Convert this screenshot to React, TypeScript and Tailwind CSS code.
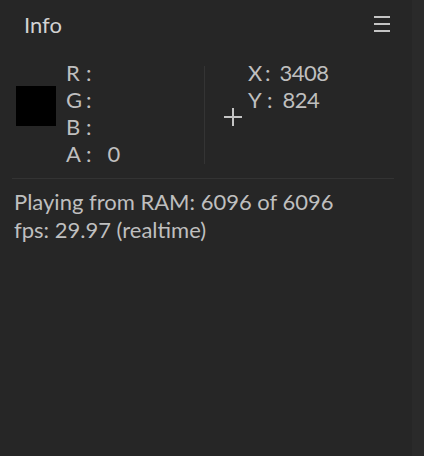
const font = { fontFamily: "Lato, 'Open Sans', sans-serif" }

function Channel({ label, value }: { label: string; value?: string }) {
  return (
    <div className="flex h-[27px] items-center">
      <span className="w-[14px] text-center">{label}</span>
      <span className="ml-[6px]">:</span>
      {value && <span className="ml-[16px]">{value}</span>}
    </div>
  )
}

export default function App() {
  return (
    <div className="flex h-[456px] w-[424px] bg-[#262626] text-[#bfbfbf]" style={font}>
      <div className="flex w-[412px] flex-col">
        <header className="flex h-[48px] items-center justify-between pl-6 pr-[22px]">
          <h1 className="text-[22px] text-[#d2d2d2]">Info</h1>
          <div className="flex w-[16px] flex-col gap-[5px]">
            <div className="h-[2px] bg-[#c4c4c4]" />
            <div className="h-[2px] bg-[#c4c4c4]" />
            <div className="h-[2px] bg-[#c4c4c4]" />
          </div>
        </header>

        <section className="ml-3 mr-[18px] flex h-[131px] border-b border-[#333333] pt-[11px] text-[22px] leading-none">
          <div className="flex w-[192px] items-start">
            <div className="ml-1 mt-[27px] h-10 w-10 bg-black" />
            <div className="ml-[10px] flex flex-col">
              <Channel label="R" />
              <Channel label="G" />
              <Channel label="B" />
              <Channel label="A" value="0" />
            </div>
          </div>
          <div className="mb-[14px] mt-[7px] w-px bg-[#343434]" />
          <div className="flex">
            <div className="relative ml-[19px] mt-[49px] h-[18px] w-[18px]">
              <div className="absolute left-[8px] top-0 h-full w-[2px] bg-[#c4c4c4]" />
              <div className="absolute left-0 top-[8px] h-[2px] w-full bg-[#c4c4c4]" />
            </div>
            <div className="ml-[6px] flex flex-col">
              <div className="flex h-[27px] items-center">
                <span className="w-[12px]">X</span>
                <span className="ml-[5px]">:</span>
                <span className="ml-[9px] tracking-[-0.5px]">3408</span>
              </div>
              <div className="flex h-[27px] items-center">
                <span className="w-[12px]">Y</span>
                <span className="ml-[7px]">:</span>
                <span className="ml-[10px] tracking-[-0.5px]">824</span>
              </div>
            </div>
          </div>
        </section>

        <div className="px-[14px] pt-[9px] text-[22px] leading-[28px]">
          <p>Playing from RAM: 6096 of 6096</p>
          <p>fps: 29.97 (realtime)</p>
        </div>
      </div>
      <div className="flex-1 bg-[#2a2a2a]" />
    </div>
  )
}
